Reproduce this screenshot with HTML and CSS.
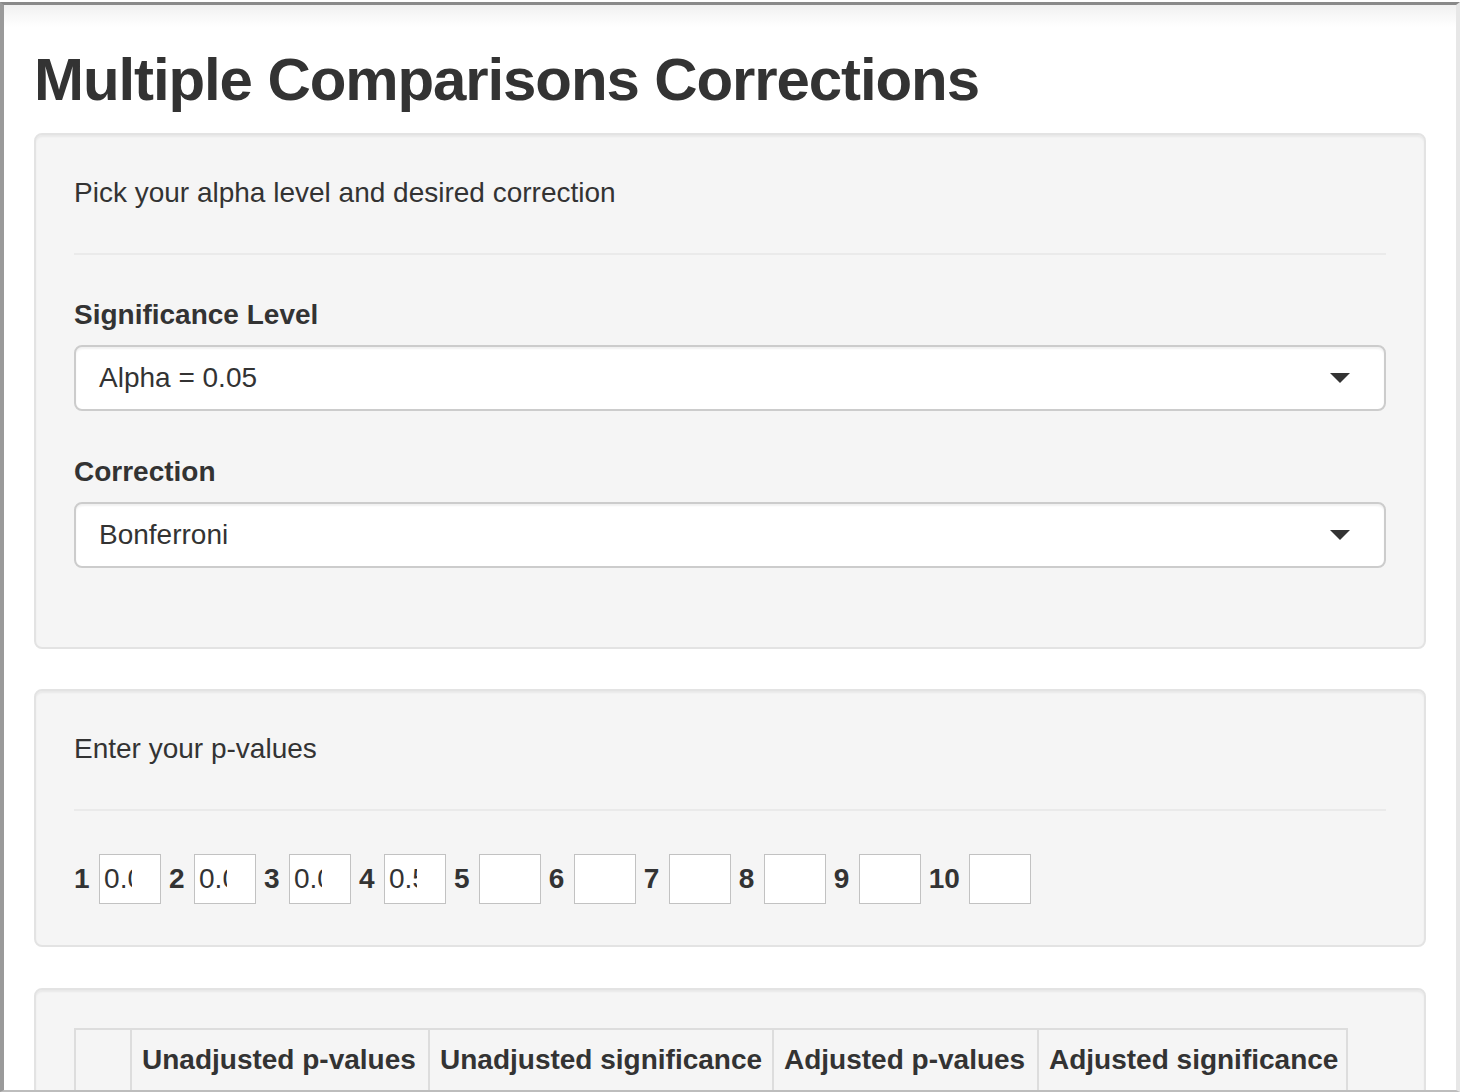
FILE: index.html
```html
<!DOCTYPE html>
<html lang="en">
<head>
<meta charset="utf-8">
<title>Multiple Comparisons Corrections</title>
<link rel="stylesheet" href="styles.css">
</head>
<body>
<div class="frame">
  <div class="container">
    <h2 class="title">Multiple Comparisons Corrections</h2>

    <div class="well well-first">
      <p class="lead-text">Pick your alpha level and desired correction</p>
      <hr class="divider">
      <div class="form-group">
        <label class="field-label">Significance Level</label>
        <div class="select">
          <span class="select-value">Alpha = 0.05</span>
          <span class="caret"></span>
        </div>
      </div>
      <div class="form-group form-group-last">
        <label class="field-label">Correction</label>
        <div class="select">
          <span class="select-value">Bonferroni</span>
          <span class="caret"></span>
        </div>
      </div>
    </div>

    <div class="well well-second">
      <p class="lead-text">Enter your p-values</p>
      <hr class="divider">
      <div class="pvalue-row">
        <div class="pvalue"><label class="pvalue-label">1</label><input class="pvalue-input" type="text" value="0.01"></div>
        <div class="pvalue"><label class="pvalue-label">2</label><input class="pvalue-input" type="text" value="0.02"></div>
        <div class="pvalue"><label class="pvalue-label">3</label><input class="pvalue-input" type="text" value="0.03"></div>
        <div class="pvalue"><label class="pvalue-label">4</label><input class="pvalue-input" type="text" value="0.5"></div>
        <div class="pvalue"><label class="pvalue-label">5</label><input class="pvalue-input" type="text" value=""></div>
        <div class="pvalue"><label class="pvalue-label">6</label><input class="pvalue-input" type="text" value=""></div>
        <div class="pvalue"><label class="pvalue-label">7</label><input class="pvalue-input" type="text" value=""></div>
        <div class="pvalue"><label class="pvalue-label">8</label><input class="pvalue-input" type="text" value=""></div>
        <div class="pvalue"><label class="pvalue-label">9</label><input class="pvalue-input" type="text" value=""></div>
        <div class="pvalue"><label class="pvalue-label">10</label><input class="pvalue-input" type="text" value=""></div>
      </div>
    </div>

    <div class="well well-third">
      <table class="results">
        <colgroup>
          <col class="col-index">
          <col class="col-unadj-p">
          <col class="col-unadj-sig">
          <col class="col-adj-p">
          <col class="col-adj-sig">
        </colgroup>
        <thead>
          <tr>
            <th></th>
            <th>Unadjusted p-values</th>
            <th>Unadjusted significance</th>
            <th>Adjusted p-values</th>
            <th>Adjusted significance</th>
          </tr>
        </thead>
      </table>
    </div>
  </div>
</div>
</body>
</html>
```

FILE: styles.css
```css
html, body {
  margin: 0;
  padding: 0;
  background: #ffffff;
}

body {
  font-family: "Liberation Sans", Arial, "Helvetica Neue", sans-serif;
  font-size: 28px;
  line-height: 40px;
  color: #333333;
  overflow: hidden;
}

.frame {
  margin-top: 2px;
  height: 1085px;
  border-top: 3px solid #8a8a8a;
  border-left: 4px solid #9a9a9a;
  border-right: 4px solid #e7e7e7;
  border-bottom: 2px solid #bdbdbd;
  overflow: hidden;
  background: linear-gradient(#f1f1f1, #ffffff 22px);
}

.container {
  padding: 0 30px;
}

.title {
  margin: 42px 0 20px 0;
  font-size: 60px;
  line-height: 66px;
  font-weight: 700;
  letter-spacing: -1.1px;
  color: #333333;
}

.well {
  background: #f5f5f5;
  border: 2px solid #e3e3e3;
  border-radius: 8px;
  box-shadow: inset 0 2px 2px rgba(0, 0, 0, 0.05);
  padding: 38px;
  margin-bottom: 40px;
}

.well-second {
  margin-bottom: 41px;
}

.lead-text {
  margin: 0;
}

.divider {
  margin: 40px 0;
  border: 0;
  border-top: 2px solid #eaeaea;
  height: 0;
}

.form-group {
  margin-bottom: 41px;
}

.field-label {
  display: block;
  font-weight: 700;
  margin-bottom: 10px;
}

.select {
  box-sizing: border-box;
  height: 66px;
  border: 2px solid #cccccc;
  border-radius: 8px;
  background: #ffffff;
  box-shadow: inset 0 2px 2px rgba(0, 0, 0, 0.06);
  padding: 0 34px 0 23px;
  display: flex;
  align-items: center;
  justify-content: space-between;
}

.caret {
  width: 0;
  height: 0;
  border-left: 10px solid transparent;
  border-right: 10px solid transparent;
  border-top: 10px solid #333333;
}

.pvalue-row {
  display: flex;
  align-items: center;
  height: 56px;
}

.pvalue {
  display: flex;
  align-items: center;
  margin-right: 7.9px;
}

.pvalue-label {
  font-weight: 700;
  margin-right: 9.5px;
}

.pvalue-input {
  box-sizing: border-box;
  width: 62px;
  height: 50px;
  border: 1px solid #c2c2c2;
  border-radius: 0;
  background: #ffffff;
  padding: 0 28px 0 4px;
  margin: 0;
  font-family: "Liberation Sans", Arial, sans-serif;
  font-size: 28px;
  color: #333333;
  outline: none;
}

.results {
  border-collapse: collapse;
  table-layout: fixed;
  width: 1272px;
}

.col-index { width: 56px; }
.col-unadj-p { width: 298px; }
.col-unadj-sig { width: 344px; }
.col-adj-p { width: 265px; }
.col-adj-sig { width: 309px; }

.results th {
  border: 2px solid #dddddd;
  padding: 10px;
  text-align: left;
  white-space: nowrap;
  overflow: hidden;
  font-weight: 700;
  height: 80px;
  vertical-align: top;
}
```
